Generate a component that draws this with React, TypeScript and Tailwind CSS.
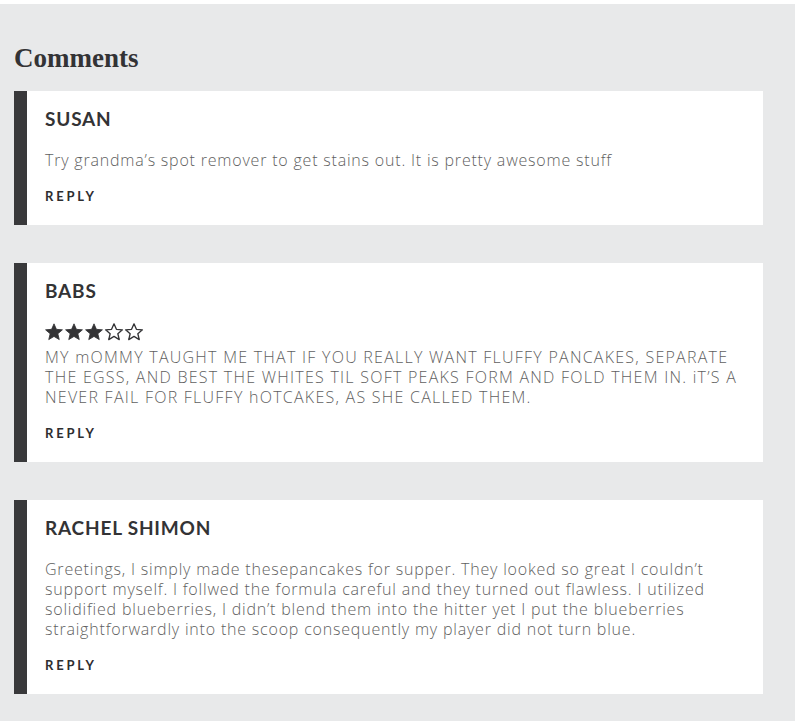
import React from 'react';

type Comment = {
    name: string;
    stars?: number;
    text: string;
    caps?: boolean;
};

const comments: Comment[] = [
    {
        name: 'SUSAN',
        text: 'Try grandma\u2019s spot remover to get stains out. It is pretty awesome stuff',
    },
    {
        name: 'BABS',
        stars: 3,
        caps: true,
        text: 'MY mOMMY TAUGHT ME THAT IF YOU REALLY WANT FLUFFY PANCAKES, SEPARATE THE EGSS, AND BEST THE WHITES TIL SOFT PEAKS FORM AND FOLD THEM IN. iT\u2019S A NEVER FAIL FOR FLUFFY hOTCAKES, AS SHE CALLED THEM.',
    },
    {
        name: 'RACHEL SHIMON',
        text: 'Greetings, I simply made thesepancakes for supper. They looked so great I couldn\u2019t support myself. I follwed the formula careful and they turned out flawless. I utilized solidified blueberries, I didn\u2019t blend them into the hitter yet I put the blueberries straightforwardly into the scoop consequently my player did not turn blue.',
    },
];

function Star({ filled }: { filled: boolean }) {
    return (
        <svg width="20" height="20" viewBox="0 0 24 24" className="shrink-0">
            <path
                d="M12 2.2l2.9 6.6 7.2.6-5.5 4.7 1.7 7-6.3-3.8-6.3 3.8 1.7-7L1.9 9.4l7.2-.6z"
                fill={filled ? '#333335' : 'none'}
                stroke="#333335"
                strokeWidth={filled ? 1 : 1.6}
                strokeLinejoin="round"
            />
        </svg>
    );
}

function CommentCard({ comment }: { comment: Comment }) {
    const hasStars = comment.stars !== undefined;
    return (
        <div className="bg-white border-l-[13px] border-[#39393b] pl-[18px] pr-[24px] pt-[15px] pb-[21px]">
            <div className="h-[26px] leading-[26px] text-[19px] font-bold tracking-[0.8px] text-[#333335] font-['Lato',sans-serif]">
                {comment.name}
            </div>
            {hasStars && (
                <div className="flex mt-[18px] h-[20px] -ml-[1px]">
                    {[0, 1, 2, 3, 4].map((i) => (
                        <Star key={i} filled={i < (comment.stars ?? 0)} />
                    ))}
                </div>
            )}
            <p
                className={`${hasStars ? 'mt-[5px]' : 'mt-[18px]'} ${comment.caps ? 'tracking-[1.25px]' : 'tracking-[0.8px]'} text-[16px] leading-[20px] font-light text-[#5f5f61] font-['Open_Sans',sans-serif]`}
            >
                {comment.text}
            </p>
            <div className="mt-[18px] h-[16px] leading-[16px] text-[13px] font-bold tracking-[2.8px] text-[#2e2e30] font-['Lato',sans-serif]">
                REPLY
            </div>
        </div>
    );
}

export default function App() {
    return (
        <div className="bg-white pt-[4px] min-h-[721px]">
            <div className="bg-[#e8e9ea] min-h-[717px] pl-[14px] pr-[32px] pt-[36px] pb-[27px]">
                <h2 className="text-[27px] leading-[36px] font-bold text-[#333335] font-['Liberation_Serif',serif] mb-[15px]">
                    Comments
                </h2>
                <div className="flex flex-col gap-[38px]">
                    {comments.map((c) => (
                        <CommentCard key={c.name} comment={c} />
                    ))}
                </div>
            </div>
        </div>
    );
}
